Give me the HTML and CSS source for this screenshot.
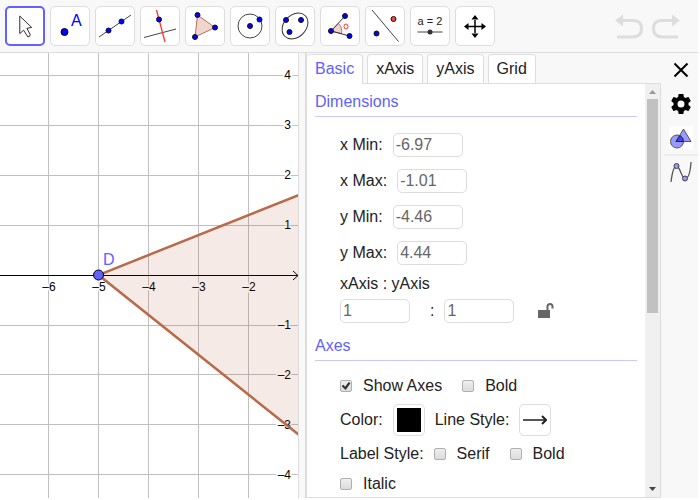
FILE: index.html
```html
<!DOCTYPE html>
<html lang="en">
<head>
<meta charset="utf-8">
<title>Graphics settings</title>
<link rel="stylesheet" href="styles.css">
</head>
<body>
<div class="app">
  <header class="toolbar">
    <button class="tool active" aria-label="Move"><svg viewBox="0 0 38 38"><path d="M13.500 8.500V27L17.500 23.500L22 30.500Q24.500 30.500 24.500 28L21 21.500L26 20.500Z" fill="#fff" stroke="#222"/></svg></button>
    <button class="tool" aria-label="Point"><svg viewBox="0 0 38 38"><circle cx="13.500" cy="25" r="3.500" fill="#00f" stroke="#000"/><text x="20" y="19" class="point-letter">A</text></svg></button>
    <button class="tool" aria-label="Line"><svg viewBox="0 0 38 38"><path d="M3 30L35 8" stroke="#444"/><g class="dots"><circle cx="12.500" cy="23.500" r="2.500"/><circle cx="25.500" cy="14.500" r="2.500"/></g></svg></button>
    <button class="tool" aria-label="Perpendicular line"><svg viewBox="0 0 38 38"><path d="M3 30.500L35 22" stroke="#444"/><path d="M15.500 3L24 35" stroke="#f33" stroke-width="1.300"/><g class="dots"><circle cx="18" cy="12.500" r="2.500"/></g></svg></button>
    <button class="tool" aria-label="Polygon"><svg viewBox="0 0 38 38"><path d="M11.500 8L29 20.500L9 30Z" fill="#efd5cd" stroke="#b97050"/><g class="dots"><circle cx="11.500" cy="8" r="2.500"/><circle cx="29" cy="20.500" r="2.500"/><circle cx="9" cy="30" r="2.500"/></g></svg></button>
    <button class="tool" aria-label="Circle"><svg viewBox="0 0 38 38"><circle cx="19" cy="19" r="12" fill="none" stroke="#444"/><g class="dots"><circle cx="19" cy="19" r="2.500"/><circle cx="28.500" cy="12.500" r="2.500"/></g></svg></button>
    <button class="tool" aria-label="Ellipse"><svg viewBox="0 0 38 38"><ellipse cx="19" cy="19" rx="14.500" ry="11" transform="rotate(-45 19 19)" fill="none" stroke="#333"/><g class="dots"><circle cx="10" cy="13" r="2.500"/><circle cx="25" cy="13" r="2.500"/><circle cx="13.500" cy="25" r="2.500"/></g></svg></button>
    <button class="tool" aria-label="Angle"><svg viewBox="0 0 38 38"><path d="M10 24L17.500 16.500Q21.500 20 20.500 26.500Z" fill="#efd5cd" stroke="#d66"/><path d="M24 9L10 24L28.500 29" fill="none" stroke="#333"/><ellipse cx="25" cy="19.500" rx="2" ry="2.500" fill="none" stroke="#f33"/><g class="dots"><circle cx="24" cy="9" r="2.500"/><circle cx="10" cy="24" r="2.500"/><circle cx="28.500" cy="29" r="2.500"/></g></svg></button>
    <button class="tool" aria-label="Reflect"><svg viewBox="0 0 38 38"><path d="M6 3L32.500 34.500" stroke="#444"/><g class="dots"><circle cx="10.500" cy="26.500" r="2.500"/><circle cx="27.500" cy="12" r="2.500" class="red"/></g></svg></button>
    <button class="tool" aria-label="Slider"><svg viewBox="0 0 38 38"><text x="19" y="18" text-anchor="middle" class="slider-label">a = 2</text><path d="M6.500 25H31.500" stroke="#444"/><circle cx="19" cy="25" r="2.500" fill="#333"/></svg></button>
    <button class="tool" aria-label="Move view"><svg viewBox="0 0 38 38"><path d="M19 13V26M12 19.500H26" stroke="#000" stroke-width="1.500"/><path d="M19 8L22.500 12.500H15.500ZM19 31L15.500 26.500H22.500ZM8 19.500L12.500 16V23ZM30 19.500L25.500 23V16Z"/></svg></button>
    <div class="history">
      <button aria-label="Undo"><svg viewBox="0 0 30 26"><path d="M7 7.500H19Q26.500 8 26.500 15.500Q26.500 24 17 24H2" fill="none" stroke="#ddd" stroke-width="3"/><path d="M0 7.500L8 1.500V13.500Z" fill="#ddd"/></svg></button>
      <button aria-label="Redo"><svg viewBox="0 0 30 26"><path d="M23 7.500H11Q3.500 8 3.500 15.500Q3.500 24 13 24H28" fill="none" stroke="#ddd" stroke-width="3"/><path d="M30 7.500L22 1.500V13.500Z" fill="#ddd"/></svg></button>
    </div>
  </header>
  <main class="workspace">
    <section class="graph" aria-label="Graphics view">
      <svg class="plot">
        <g class="grid">
          <path d="M48.500 0V1000M98.500 0V1000M148.500 0V1000M198.500 0V1000M248.500 0V1000"/>
          <path d="M0 22.500H1000M0 72.500H1000M0 122.500H1000M0 172.500H1000M0 272.500H1000M0 321.500H1000M0 371.500H1000M0 421.500H1000"/>
        </g>
        <path d="M0 222.500H298M293 218L298 222.500L293 227" class="axis"/>
        <g class="ticks" text-anchor="middle">
          <text x="49" y="238">–6</text><text x="99" y="238">–5</text><text x="149" y="238">–4</text><text x="199" y="238">–3</text><text x="249" y="238">–2</text>
        </g>
        <g class="ticks" text-anchor="end">
          <text x="291" y="26">4</text><text x="291" y="76">3</text><text x="291" y="126">2</text><text x="291" y="176">1</text>
          <text x="291" y="276">–1</text><text x="291" y="326">–2</text><text x="291" y="376">–3</text><text x="291" y="426">–4</text>
        </g>
        <path d="M299 142L98.500 222L299 382" class="triangle"/>
        <circle cx="98.500" cy="222" r="5" class="vertex"/>
        <text x="103" y="212" class="vertex-name">D</text>
      </svg>
    </section>
    <section class="settings" aria-label="Settings">
      <div class="pane">
        <div class="tabs" role="tablist">
          <button class="tab selected" role="tab" aria-selected="true">Basic</button>
          <button class="tab" role="tab">xAxis</button>
          <button class="tab" role="tab">yAxis</button>
          <button class="tab" role="tab">Grid</button>
        </div>
        <div class="body">
          <form class="content">
            <h2>Dimensions</h2>
            <div class="fields">
              <div class="field"><label for="xmin">x Min:</label><input id="xmin" type="text" value="-6.97"></div>
              <div class="field"><label for="xmax">x Max:</label><input id="xmax" type="text" value="-1.01"></div>
              <div class="field"><label for="ymin">y Min:</label><input id="ymin" type="text" value="-4.46"></div>
              <div class="field"><label for="ymax">y Max:</label><input id="ymax" type="text" value="4.44"></div>
            </div>
            <div class="ratio">
              <label for="ratiox">xAxis : yAxis</label>
              <div class="ratio-row">
                <input id="ratiox" type="text" value="1">
                <div class="field"><label for="ratioy">:</label><input id="ratioy" type="text" value="1"></div>
                <button type="button" class="lock" aria-label="Lock ratio"><svg viewBox="0 0 16 16"><path d="M0 7H12V15H0Z" fill="#666"/><path d="M9.500 7V3.500Q9.500 1 12 1Q14.500 1 14.500 3.500V5.500" fill="none" stroke="#666" stroke-width="2"/></svg></button>
              </div>
            </div>
            <h2>Axes</h2>
            <div class="options">
              <div class="row"><label class="check"><input type="checkbox" checked>Show Axes</label><label class="check"><input type="checkbox">Bold</label></div>
              <div class="row swatches">
                <label for="color">Color:</label><button type="button" id="color" class="swatch"><span class="chip"></span></button>
                <label for="line">Line Style:</label><button type="button" id="line" class="swatch"><svg viewBox="0 0 24 24"><path d="M0 12H22" stroke="#555" stroke-width="2"/><path d="M19 8L23 12L19 16" fill="none" stroke="#222" stroke-width="2"/></svg></button>
              </div>
              <div class="row"><span class="caption">Label Style:</span><label class="check"><input type="checkbox">Serif</label><label class="check"><input type="checkbox">Bold</label></div>
              <div class="row"><label class="check"><input type="checkbox">Italic</label></div>
            </div>
          </form>
          <div class="scrollbar" aria-hidden="true">
            <svg viewBox="0 0 15 15"><path d="M4 10L7.500 6L11 10Z" fill="#999"/></svg>
            <div class="track"><div class="thumb"></div></div>
            <svg viewBox="0 0 15 15"><path d="M4 5L7.500 9L11 5Z" fill="#444"/></svg>
          </div>
        </div>
      </div>
      <nav class="rail" aria-label="Views">
        <button aria-label="Close"><svg viewBox="0 0 24 24"><path d="M5.500 5.500L18.500 18.500M18.500 5.500L5.500 18.500" stroke="#000" stroke-width="2"/></svg></button>
        <button aria-label="Preferences"><svg viewBox="0 0 24 24"><path fill-rule="evenodd" d="M19.430 12.980c.04-.32.070-.64.070-.98s-.03-.66-.07-.98l2.110-1.650c.19-.15.240-.42.120-.64l-2-3.460c-.12-.22-.39-.3-.61-.22l-2.490 1c-.52-.4-1.080-.73-1.690-.98l-.38-2.650C14.460 2.180 14.250 2 14 2h-4c-.25 0-.46.18-.49.420l-.38 2.650c-.61.250-1.170.590-1.690.980l-2.490-1c-.23-.09-.49 0-.61.220l-2 3.460c-.13.220-.07.490.120.640l2.110 1.650c-.04.320-.07.650-.07.980s.03.660.070.980l-2.110 1.650c-.19.150-.24.420-.12.640l2 3.460c.12.220.390.300.610.220l2.490-1c.52.400 1.080.730 1.690.980l.38 2.650c.03.240.240.420.490.420h4c.25 0 .46-.18.490-.42l.38-2.650c.61-.25 1.170-.59 1.690-.98l2.490 1c.23.090.490 0 .610-.22l2-3.460c.12-.22.070-.49-.12-.64l-2.110-1.650zM12 15.500a3.500 3.500 0 1 1 0-7a3.500 3.500 0 0 1 0 7z"/></svg></button>
        <button class="view" aria-label="Geometry"><svg viewBox="0 0 24 24"><circle cx="8" cy="15.500" r="6.500" fill="#99f" stroke="#555"/><path d="M14.500 3L22 15.500H7Z" fill="#99f" stroke="#555"/><path d="M11 9.500Q14.500 11.500 14.500 15.500H7Z" fill="#44f" stroke="#223"/></svg></button>
        <hr>
        <button aria-label="Functions"><svg viewBox="0 0 24 24"><path d="M2 22Q4 6 7.500 6C11 6 12.500 18.500 16 18.500Q21 18.500 22 2" fill="none" stroke="#555" stroke-width="1.300"/><circle cx="7.500" cy="6" r="2.500" fill="#99f" stroke="#444"/><circle cx="16" cy="18.500" r="2.500" fill="#99f" stroke="#444"/></svg></button>
      </nav>
    </section>
  </main>
</div>
</body>
</html>
```
FILE: styles.css
```css
* { box-sizing: border-box; }
body {
  margin: 0;
  padding: 0 2px 2px 0;
  background: #fff;
  color: #222;
  font: 16px/20px "Liberation Sans", Arial, sans-serif;
}
button, input { font: inherit; color: inherit; margin: 0; }
button { padding: 0; border: 0; background: none; }
svg { display: block; }

.app {
  display: flex;
  flex-direction: column;
  height: calc(100vh - 2px);
  background: #f8f8f8;
}
.toolbar {
  display: flex;
  gap: 5px;
  padding: 6px 18px 6px 5px;
  border-bottom: 1px solid #ddd;
}
.tool {
  width: 40px;
  height: 40px;
  border: 1px solid #ddd;
  border-radius: 5px;
  background: #fff;
}
.tool svg { width: 100%; height: 100%; }
.tool.active { border: 2px solid #6161ff; }
.dots { fill: #00f; stroke: #111; }
.red { fill: #f44; }
.point-letter { font-size: 16px; fill: #00f; }
.slider-label { font-size: 11px; fill: #222; }
.history {
  display: flex;
  gap: 5px;
  align-items: center;
  margin-left: auto;
}
.history svg { width: 30px; height: 26px; }

.workspace { flex: 1; display: flex; gap: 6px; min-height: 0; }
.graph {
  flex: 1;
  min-width: 0;
  border-right: 1px solid #ddd;
  background: #fff;
}
.plot { width: 100%; height: 100%; }
.grid { stroke: #c0c0c0; fill: none; }
.axis { stroke: #000; fill: none; }
.ticks {
  font-size: 12px;
  fill: #000;
  stroke: #fff;
  stroke-width: 3px;
  paint-order: stroke;
}
.triangle {
  fill: rgba(153, 51, 0, 0.1);
  stroke: #b86b4a;
  stroke-width: 2.5px;
}
.vertex { fill: #6161ff; stroke: #000; }
.vertex-name { font-size: 16px; fill: #6161ff; }

.settings {
  flex: 0 0 393px;
  display: flex;
  border-left: 2px solid #dcdcdc;
}
.pane {
  flex: 1;
  display: flex;
  flex-direction: column;
  min-width: 0;
  padding-top: 1px;
}
.tabs { display: flex; gap: 4px; }
.tab {
  height: 29px;
  padding: 0 8px;
  border: 1px solid #ddd;
  border-bottom: 0;
  border-radius: 4px 4px 0 0;
  background: #fff;
}
.tab.selected {
  height: 30px;
  margin-bottom: -1px;
  padding-bottom: 1px;
  border-left: 0;
  color: #6161ff;
  z-index: 1;
}
.body {
  flex: 1;
  display: flex;
  min-height: 0;
  border: 1px solid #ddd;
  border-left: 0;
  background: #fff;
}
.content { flex: 1; padding: 8px 8px 0; overflow: hidden; }
h2 {
  margin: 0;
  padding-bottom: 4px;
  border-bottom: 1px solid #c9c9ff;
  color: #6161ff;
  font-size: 16px;
  font-weight: 400;
  line-height: 20px;
}
.fields {
  display: flex;
  flex-direction: column;
  gap: 12px;
  padding: 16px 0 9px 25px;
}
.field { display: flex; gap: 10px; align-items: center; }
input[type="text"] {
  width: 70px;
  height: 24px;
  padding: 0 2px;
  border: 1px solid #ddd;
  border-radius: 5px;
  background: #fff;
  color: #666;
}
.ratio {
  display: flex;
  flex-direction: column;
  gap: 5px;
  padding: 0 0 13px 25px;
}
.ratio-row { display: flex; gap: 20px; align-items: center; }
.lock { margin-left: 4px; }
.lock svg { width: 16px; height: 16px; }
.options { padding: 10px 0 0 25px; }
.row { display: flex; align-items: center; gap: 20px; min-height: 30px; }
.swatches { gap: 10px; min-height: 38px; }
.caption { margin-right: -10px; }
.check { display: flex; align-items: center; gap: 11px; }
input[type="checkbox"] {
  appearance: none;
  display: grid;
  place-items: center;
  width: 12px;
  height: 12px;
  border: 1px solid #b0b0b0;
  border-radius: 2px;
  background: linear-gradient(#eee, #dcdcdc);
}
input[type="checkbox"]:checked::before {
  content: "";
  width: 9px;
  height: 8px;
  background: #333;
  clip-path: polygon(0 50%, 20% 35%, 40% 60%, 80% 0, 100% 15%, 45% 100%);
}
.swatch {
  display: grid;
  place-items: center;
  width: 32px;
  height: 32px;
  border: 1px solid #ddd;
  border-radius: 5px;
  background: #fff;
}
.swatch svg, .chip { width: 24px; height: 24px; }
.chip { background: #000; }

.scrollbar {
  display: flex;
  flex-direction: column;
  width: 15px;
  background: #f0f0f0;
}
.track { flex: 1; padding: 0 2px; }
.thumb { height: 56%; background: #c1c1c1; }

.rail {
  display: flex;
  flex-direction: column;
  align-items: center;
  gap: 10px;
  width: 37px;
  padding: 5px 0 0 3px;
}
.rail svg { width: 24px; height: 24px; }
.view { border-radius: 2px; background: #fff; }
.rail hr {
  width: 100%;
  height: 2px;
  margin: -6px 0;
  border: 0;
  background: #eee;
}
```
